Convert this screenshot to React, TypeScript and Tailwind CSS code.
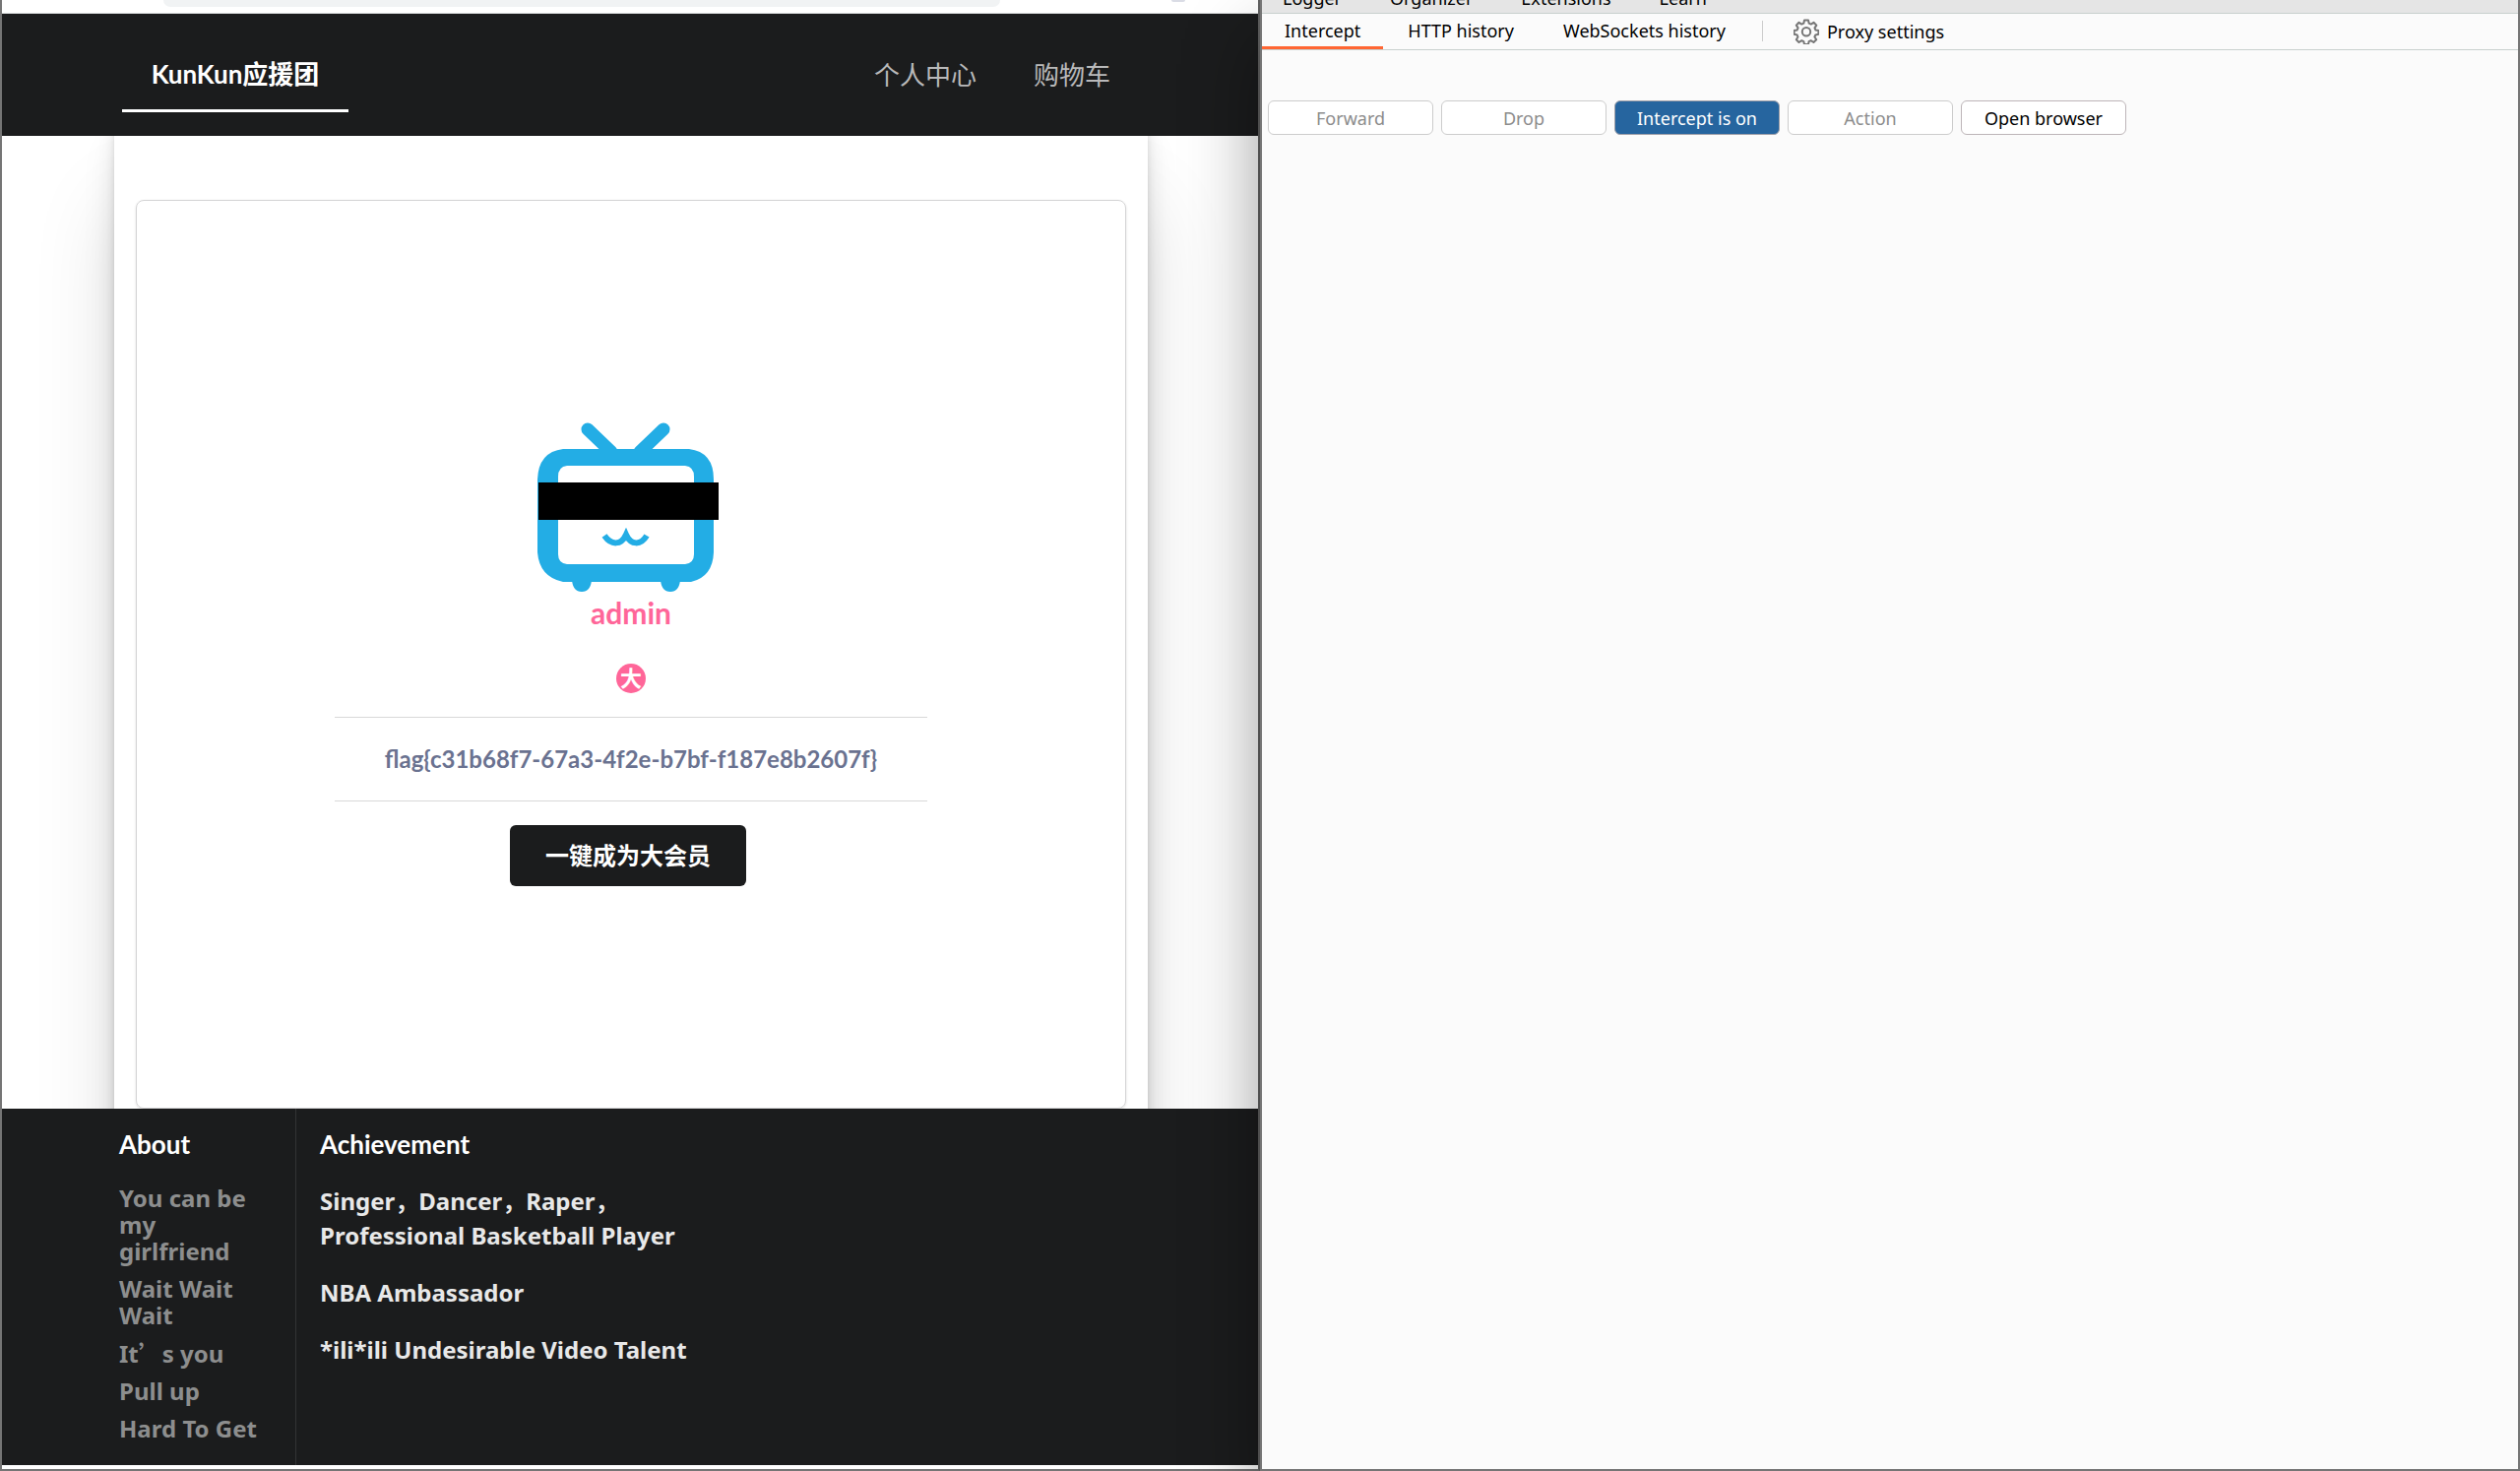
import type { ReactNode } from 'react'

const ABOUT = ['You can be my girlfriend', 'Wait Wait Wait', 'It’s you', 'Pull up', 'Hard To Get']

const ACHIEVEMENTS = [
  'Singer，Dancer，Raper，Professional Basketball Player',
  'NBA Ambassador',
  '*ili*ili Undesirable Video Talent',
]

const TOOLS = ['Logger', 'Organizer', 'Extensions', 'Learn']

const TABS = [
  { label: 'Intercept', active: true },
  { label: 'HTTP history', active: false },
  { label: 'WebSockets history', active: false },
]

const ACTIONS = [
  { label: 'Forward', kind: 'disabled' },
  { label: 'Drop', kind: 'disabled' },
  { label: 'Intercept is on', kind: 'primary' },
  { label: 'Action', kind: 'disabled' },
  { label: 'Open browser', kind: 'normal' },
] as const

const ACTION_STYLES = {
  disabled: 'border-[#cccccc] bg-white text-[#8c8c8c]',
  primary: 'border-[#a0a0a8] bg-[#26659f] text-white',
  normal: 'border-[#bdb5b8] bg-white text-black',
}

function TvAvatar() {
  return (
    <svg viewBox="0 0 186 174" className="mr-1.5 h-[174px] w-[186px]" role="img" aria-label="avatar">
      <path d="M52 7 L76 30 M129 7 L105 30" fill="none" stroke="#23ade5" strokeLinecap="round" strokeWidth="13" />
      <path
        fill="#23ade5"
        fillRule="evenodd"
        d="M27 27H155Q180 30 180 58V132Q179 157 157 162H27Q3 157 1 132V58Q2 30 27 27ZM31 44Q22 45 22 55V134Q22 143 31 144H151Q160 143 160 134V55Q160 45 151 44Z"
      />
      <path fill="#23ade5" d="M36 160H56Q55 172 46 172T36 160ZM126 160H146Q145 172 136 172T126 160Z" />
      <path
        fill="none"
        stroke="#23ade5"
        strokeWidth="6"
        d="M69 115C76 125 86 125 91 114C96 125 106 125 112 115"
      />
      <rect x="2" y="61" width="183" height="38" fill="#000" />
    </svg>
  )
}

function Gear() {
  return (
    <svg viewBox="0 0 26 26" className="h-[26px] w-[26px]" fill="none" stroke="#767676" strokeWidth="2" strokeLinejoin="round">
      <path d="M11 1.5h4l.7 3.2 2 .9 2.8-1.8 2.8 2.8-1.8 2.8.8 2 3.1.6v3.8l-3.1.7-.9 2 1.8 2.8-2.8 2.7-2.8-1.8-2 .9-.6 3h-4l-.7-3-2-.9-2.8 1.8-2.7-2.7 1.7-2.8-.8-2-3.1-.7V12l3.1-.6.9-2-1.8-2.8 2.7-2.8 2.8 1.8 2-.9z" />
      <circle cx="13" cy="13.2" r="4.2" />
    </svg>
  )
}

function FooterTitle({ children }: { children: ReactNode }) {
  return (
    <h4 className="font-['Lato','Noto_Sans_CJK_SC',sans-serif] text-[26px] leading-8 font-bold text-white">
      {children}
    </h4>
  )
}

// the apostrophe is set full-width, like the rest of the Chinese punctuation
function withWideQuote(text: string) {
  const [head, tail] = text.split('’')
  if (tail === undefined) return text
  return (
    <>
      {head}
      <span className="font-['Noto_Sans_CJK_SC',sans-serif]" lang="zh-CN">’</span>
      {tail}
    </>
  )
}

function SitePane() {
  return (
    <section className="flex flex-col overflow-hidden border-r-2 border-b-2 border-l-2 border-[#757575] border-r-[#626262] bg-white font-['Lato','Noto_Sans_CJK_SC',sans-serif]">
      <div className="z-10 flex h-3.5 items-start border-b border-[#d8dadb] bg-white pr-[74px] pl-[164px]">
        <div className="h-[7px] flex-1 rounded-b-[20px] bg-[#f1f3f4]" />
        <div className="ml-[174px] h-0.5 w-3.5 rounded-b-full bg-[#dadce5]" />
      </div>

      <header className="z-10 flex h-[124px] items-center justify-between bg-[#1b1c1d] pr-[150px] pl-[122px] text-[26px]">
        <a href="#" className="flex h-[76px] w-[230px] items-center justify-center border-b-3 border-white pt-0.5 font-bold text-white">
          KunKun应援团
        </a>
        <nav className="flex gap-[58px] text-[#b9b9ba]">
          <a href="#">个人中心</a>
          <a href="#">购物车</a>
        </nav>
      </header>

      {/* the sheet slides under the header so its shadow has no gap at the top */}
      <main className="-mt-8 flex flex-1 flex-col pr-28 pl-[114px]">
        <div className="flex flex-1 flex-col bg-white px-[22px] pt-[97px] shadow-[0_3px_2px_rgba(0,0,0,0.034),0_7px_5px_rgba(0,0,0,0.048),0_12px_10px_rgba(0,0,0,0.06),0_22px_18px_rgba(0,0,0,0.072),0_42px_33px_rgba(0,0,0,0.086),0_100px_80px_rgba(0,0,0,0.12)]">
          <div className="flex flex-1 flex-col items-center rounded-lg border border-[#d4d4d5] pt-[225px] shadow-sm">
            <TvAvatar />
            <h2 className="pt-px text-[30px] leading-9 font-bold text-[#ff6699]">admin</h2>
            <div className="mt-[34px] flex size-[30px] items-center justify-center rounded-full bg-[#ff6699] text-[22px] leading-none font-bold text-white">
              大
            </div>
            <div className="mt-6 flex h-[86px] w-3/5 items-center justify-center border-y border-[#d8d9d9] text-2xl font-bold text-[#6a7290]">
              {'flag{c31b68f7-67a3-4f2e-b7bf-f187e8b2607f}'}
            </div>
            <button className="mt-6 mr-1.5 h-[62px] w-[240px] rounded-md bg-[#1b1c1d] text-2xl font-bold text-white">
              一键成为大会员
            </button>
          </div>
        </div>
      </main>

      <footer className="z-10 mb-1 flex h-[362px] bg-[#1b1c1d] pl-[119px] font-['Noto_Sans','Noto_Sans_CJK_SC',sans-serif] text-2xl font-bold">
        <div className="w-[180px] border-r border-[#323334] pt-5 pr-6">
          <FooterTitle>About</FooterTitle>
          <ul className="mt-[25px] flex flex-col gap-[11px] leading-[27px] text-[#8d8e8e]">
            {ABOUT.map((item) => (
              <li key={item}>
                <a href="#" className="block">{withWideQuote(item)}</a>
              </li>
            ))}
          </ul>
        </div>
        <div className="pt-5 pl-6">
          <FooterTitle>Achievement</FooterTitle>
          <div className="mt-6 flex w-[400px] flex-col gap-[23px] leading-[35px] text-[#e8e8e8]">
            {ACHIEVEMENTS.map((item) => (
              <p key={item}>{item}</p>
            ))}
          </div>
        </div>
      </footer>
    </section>
  )
}

function ProxyPane() {
  return (
    <section className="relative z-20 flex flex-col border-r-2 border-b-2 border-l-2 border-[#757575] bg-[#fbfbfb] font-['Noto_Sans',sans-serif] text-lg shadow-[0_40px_70px_rgba(0,0,0,0.4)]">
      <nav className="flex h-3.5 items-end gap-[49px] overflow-hidden border-b border-[#c8d0ce] bg-[#e5e5e5] pb-[5px] pl-[21px] leading-5">
        {TOOLS.map((tool) => (
          <a key={tool} href="#">{tool}</a>
        ))}
      </nav>

      <div className="flex h-[37px] border-b border-[#c8d0ce]">
        {TABS.map((tab) => (
          <button
            key={tab.label}
            className={
              tab.active
                ? 'border-b-3 border-[#ff6633] px-[23px] leading-5'
                : 'border-b-3 border-transparent px-[25px] leading-5'
            }
          >
            {tab.label}
          </button>
        ))}
        <span className="mt-[7px] ml-3 h-[21px] w-px bg-[#cccccc]" />
        <button className="ml-[31px] flex items-center gap-2">
          <Gear />
          Proxy settings
        </button>
      </div>

      <div className="mt-[51px] flex gap-2 pl-1.5">
        {ACTIONS.map((a) => (
          <button
            key={a.label}
            disabled={a.kind === 'disabled'}
            className={`h-[35px] w-[168px] rounded-md border ${ACTION_STYLES[a.kind]}`}
          >
            {a.label}
          </button>
        ))}
      </div>
    </section>
  )
}

export default function App() {
  return (
    <div className="grid min-h-screen grid-cols-2 overflow-hidden">
      <SitePane />
      <ProxyPane />
    </div>
  )
}
